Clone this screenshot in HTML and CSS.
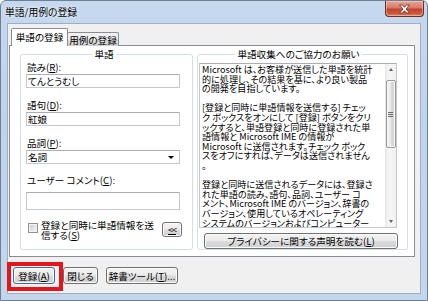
FILE: index.html
```html
<!DOCTYPE html>
<html lang="ja">
<head>
<meta charset="utf-8">
<title>単語/用例の登録</title>
<link rel="stylesheet" href="styles.css">
</head>
<body>
<div class="window">
  <div class="titlebar">
    <span class="title">単語/用例の登録</span>
    <div class="close">
      <svg width="13" height="10" viewBox="0 0 13 10"><path d="M1.5 1 L4.5 1 L6.5 3.3 L8.5 1 L11.5 1 L8 5 L11.5 9 L8.5 9 L6.5 6.7 L4.5 9 L1.5 9 L5 5 Z" fill="#fff" stroke="#5a2a22" stroke-width="0.8" stroke-linejoin="round"/></svg>
    </div>
  </div>
  <div class="client">
    <div class="tabs">
      <div class="tab active">単語の登録</div>
      <div class="tab">用例の登録</div>
    </div>
    <div class="panel">
      <fieldset class="group group-left">
        <legend>単語</legend>
        <div class="label first">読み(<u>R</u>):</div>
        <div class="field">てんとうむし</div>
        <div class="label">語句(<u>D</u>):</div>
        <div class="field">紅娘</div>
        <div class="label">品詞(<u>P</u>):</div>
        <div class="field select">名詞<span class="arrow"></span></div>
        <div class="label comment">ユーザー コメント(<u>C</u>):</div>
        <div class="field textarea"></div>
        <div class="check-row">
          <span class="checkbox"></span>
          <span class="check-text">登録と同時に単語情報を送<br>信する(<u>S</u>)</span>
          <span class="btn small"><u>&lt;&lt;</u></span>
        </div>
      </fieldset>
      <fieldset class="group group-right">
        <legend>単語収集へのご協力のお願い</legend>
        <div class="memo">
          <div class="memo-text">
            <div>Microsoft は、お客様が送信した単語を統計</div>
            <div>的に処理し、その結果を基に、より良い製品</div>
            <div>の開発を目指しています。</div>
            <div>&nbsp;</div>
            <div>[登録と同時に単語情報を送信する] チェッ</div>
            <div>ク ボックスをオンにして [登録] ボタンをクリ</div>
            <div>ックすると、単語登録と同時に登録された単</div>
            <div>語情報と Microsoft IME の情報が</div>
            <div>Microsoft に送信されます。チェック ボック</div>
            <div>スをオフにすれば、データは送信されません</div>
            <div>。</div>
            <div>&nbsp;</div>
            <div>登録と同時に送信されるデータには、登録さ</div>
            <div>れた単語の読み、語句、品詞、ユーザー コ</div>
            <div>メント、Microsoft IME のバージョン、辞書の</div>
            <div>バージョン、使用しているオペレーティング</div>
            <div>システムのバージョンおよびコンピューター</div>
          </div>
          <div class="scrollbar">
            <div class="sb-arrow up"></div>
            <div class="sb-track">
              <div class="sb-thumb"><span class="grip"></span></div>
            </div>
            <div class="sb-arrow down"></div>
          </div>
        </div>
        <div class="btn privacy">プライバシーに関する声明を読む(<u>L</u>)</div>
      </fieldset>
    </div>
    <div class="buttons">
      <div class="highlight">
        <div class="btn default">登録(<u>A</u>)</div>
      </div>
      <div class="btn close-btn">閉じる</div>
      <div class="btn tools">辞書ツール(<u>T</u>)...</div>
    </div>
  </div>
</div>
</body>
</html>
```

FILE: styles.css
```css
* { box-sizing: border-box; }
html, body { margin: 0; padding: 0; }
body {
  width: 428px;
  height: 301px;
  overflow: hidden;
  background: #fff;
  font-family: "Noto Sans CJK JP", "Noto Sans", sans-serif;
  font-size: 9.6px;
  font-feature-settings: "palt";
  color: #000;
}
u { text-decoration: underline; text-underline-offset: 1px; }

.window {
  width: 428px;
  height: 301px;
  border: 1px solid #6e7f95;
  border-radius: 6px 6px 0 0;
  background: linear-gradient(180deg, #c6d8ee 0%, #bfd3ea 40%, #c4d6ec 100%);
  display: flex;
  flex-direction: column;
}

.titlebar {
  height: 22px;
  display: flex;
  justify-content: space-between;
  align-items: flex-start;
  padding-left: 4px;
}
.title {
  line-height: 22px;
  font-size: 9.8px;
  text-shadow: 0 0 4px #eef4fb, 0 0 2px #eef4fb;
}
.close {
  width: 39px;
  height: 16px;
  margin-right: 3px;
  border: 1px solid #6a3026;
  border-top: none;
  border-radius: 0 0 4px 4px;
  background: linear-gradient(180deg, #e6a797 0%, #d77a66 45%, #c2412a 55%, #cd5a3f 85%, #e08b6e 100%);
  box-shadow: inset 0 0 0 1px rgba(255,220,210,0.45);
  display: flex;
  align-items: center;
  justify-content: center;
}

.client {
  height: 271px;
  margin: 0 6px;
  border: 1px solid #9cafc7;
  background: #f0f0f0;
  display: flex;
  flex-direction: column;
}

.tabs {
  display: flex;
  align-items: flex-end;
  padding: 4px 0 0 3px;
  margin-bottom: -1px;
  position: relative;
  z-index: 1;
}
.tab {
  height: 14px;
  width: 52px;
  margin-left: -1px;
  border: 1px solid #898c95;
  border-bottom: none;
  border-radius: 2px 2px 0 0;
  background: linear-gradient(180deg, #f2f2f2 0%, #ebebeb 50%, #dddddd 51%, #cfcfcf 100%);
  display: flex;
  align-items: center;
  justify-content: center;
  line-height: 12px;
  white-space: nowrap;
  padding: 1px 0 0;
}
.tab.active {
  width: 57px;
  height: 18px;
  margin-left: 0;
  background: #fff;
  padding: 0 0 1px;
}

.panel {
  margin-left: 1px;
  width: 406px;
  height: 212px;
  border: 1px solid #898c95;
  background: #fff;
  display: flex;
  align-items: flex-start;
  gap: 4px;
  padding: 3px 0 0 10px;
}

.group {
  margin: 0;
  padding: 0;
  border: 1px solid #d5dfe5;
  border-radius: 3px;
  display: flex;
  flex-direction: column;
}
.group legend {
  margin: 0 auto;
  padding: 0 2px;
  line-height: 10px;
}
.group-left {
  width: 173px;
  height: 201px;
  padding: 0 10px 0 5px;
}
.group-right {
  width: 210px;
  height: 201px;
  padding: 0 9px 0 1px;
}

.label {
  line-height: 11px;
  padding-left: 1px;
  margin-bottom: 1px;
  margin-top: 12px;
}
.label.first { margin-top: 3px; }
.label.comment { margin-top: 11px; margin-bottom: 6px; }

.field {
  height: 14px;
  width: 154px;
  border: 1px solid #c3c7cf;
  border-top-color: #abadb3;
  background: #fff;
  line-height: 12px;
  padding-left: 1px;
  display: flex;
  align-items: center;
}
.select { justify-content: space-between; padding-right: 5px; }
.arrow {
  width: 0;
  height: 0;
  border-left: 3px solid transparent;
  border-right: 3px solid transparent;
  border-top: 3px solid #000;
}
.textarea { height: 18px; }

.check-row {
  display: flex;
  align-items: flex-start;
  margin-top: 10px;
  width: 156px;
}
.checkbox {
  width: 10px;
  height: 10px;
  margin: 3px 3px 0 2px;
  border: 1px solid #8f8f8f;
  background: linear-gradient(135deg, #cbcfd5 0%, #f6f6f6 100%);
  box-shadow: inset 0 0 0 1px #f4f4f4;
}
.check-text {
  line-height: 10px;
}
.btn {
  border: 1px solid #707070;
  border-radius: 3px;
  background: linear-gradient(180deg, #f2f2f2 0%, #ebebeb 49%, #dddddd 51%, #cfcfcf 100%);
  box-shadow: inset 0 0 0 1px #fbfbfb;
  display: flex;
  align-items: center;
  justify-content: center;
  line-height: 12px;
  white-space: nowrap;
}
.btn.small {
  margin-left: auto;
  margin-top: 2px;
  width: 20px;
  height: 15px;
  font-size: 9px;
  letter-spacing: -1px;
}

.memo {
  margin-top: 4px;
  height: 169px;
  width: 198px;
  border: 1px solid #c3c7cf;
  border-top-color: #abadb3;
  background: #fff;
  display: flex;
  overflow: hidden;
}
.memo-text {
  flex: 1;
  overflow: hidden;
  padding: 1px 0 0 2px;
  font-size: 9.1px;
  line-height: 9.6px;
  white-space: nowrap;
}
.scrollbar {
  width: 11px;
  display: flex;
  flex-direction: column;
  background: linear-gradient(90deg, #e8e8e8, #f6f6f6 40%, #f0f0f0);
}
.sb-arrow {
  height: 11px;
  display: flex;
  align-items: center;
  justify-content: center;
}
.sb-arrow::after {
  content: "";
  border-left: 2.5px solid transparent;
  border-right: 2.5px solid transparent;
}
.sb-arrow.up::after { border-bottom: 3px solid #606060; }
.sb-arrow.down::after { border-top: 3px solid #606060; }
.sb-track {
  flex: 1;
  padding-top: 5px;
}
.sb-thumb {
  height: 68px;
  margin: 0 0.5px;
  border: 1px solid #979797;
  border-radius: 2px;
  background: linear-gradient(90deg, #f4f4f4 0%, #e9e9e9 50%, #d9d9d9 51%, #d2d2d2 100%);
  box-shadow: inset 0 0 0 1px #fafafa;
  display: flex;
  align-items: center;
  justify-content: center;
}
.grip {
  width: 5px;
  height: 5px;
  background: repeating-linear-gradient(180deg, #6a6a6a 0 1px, transparent 1px 2px);
}
.privacy {
  margin: 5px 0 0 5px;
  width: 194px;
  height: 16px;
}

.buttons {
  display: flex;
  align-items: flex-start;
  gap: 8px;
  padding: 10px 0 0 5px;
}
.buttons .btn { height: 17px; }
.highlight {
  border: 4px solid #e8141b;
  padding: 1px 4px 3px 2px;
  margin: -5px -8px -7px -6px;
}
.default {
  width: 42px;
  border-color: #3f6c96;
}
.close-btn { width: 35px; }
.tools { width: 72px; }
```
